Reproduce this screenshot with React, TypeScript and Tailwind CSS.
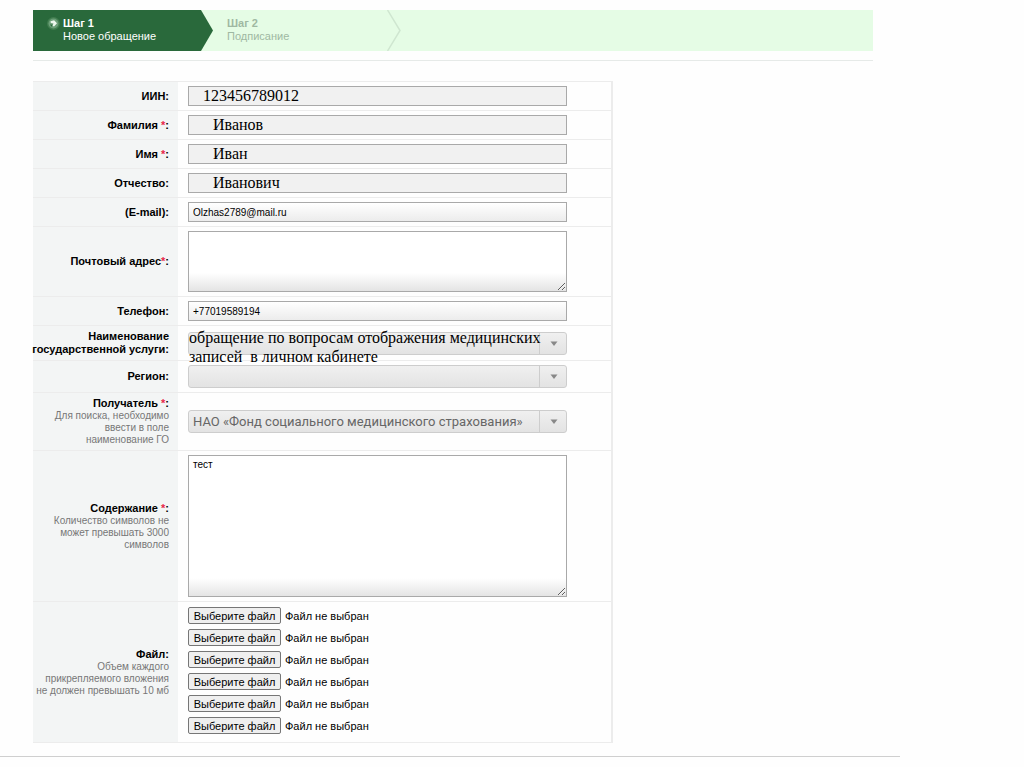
import { useRef } from 'react';
import type { ReactNode } from 'react';

interface FieldRowProps {
  id: string;
  label: ReactNode;
  required?: boolean;
  tight?: boolean;
  hint?: string;
  children: ReactNode;
}

const boxBase = 'block w-full border border-[#a9a9a9] rounded-none outline-none';
const textFont = "font-['Liberation_Sans',sans-serif]";
const serifFont = "font-['Liberation_Serif',serif]";

const files = ['file1', 'file2', 'file3', 'file4', 'file5', 'file6'];

function FieldRow({ id, label, required, tight, hint, children }: FieldRowProps) {
  return (
    <div className="grid grid-cols-[145px_1fr] border-b border-[#ececec]">
      <div className="flex flex-col items-end justify-center bg-[#f3f5f5] py-1 pr-[9px] text-right">
        <label htmlFor={id} className="text-[11px] leading-[13px] font-bold whitespace-nowrap text-black">
          {label}
          {required && (
            <>
              {tight ? '' : ' '}
              <span className="text-[#e8274b]">*</span>
            </>
          )}
          :
        </label>
        {hint && <p className="pl-0.5 text-[10px] leading-3 text-[#777]">{hint}</p>}
      </div>
      <div className="flex flex-col justify-center py-1 pr-11 pl-[10px]">{children}</div>
    </div>
  );
}

function LockedInput({ id, value, wide }: { id: string; value: string; wide?: boolean }) {
  return (
    <input
      id={id}
      type="text"
      readOnly
      defaultValue={value}
      className={`${boxBase} ${serifFont} h-5 bg-[#f1f1f1] text-base leading-4 text-black ${wide ? 'pl-[14px]' : 'pl-6'}`}
    />
  );
}

function TextInput({ id, type, value }: { id: string; type: string; value: string }) {
  return (
    <input
      id={id}
      type={type}
      defaultValue={value}
      className={`${boxBase} ${textFont} h-5 bg-linear-to-b from-white to-[#ececec] px-1 text-[10px] text-black`}
    />
  );
}

function TextArea({ id, value, size }: { id: string; value?: string; size: string }) {
  return (
    <textarea
      id={id}
      defaultValue={value}
      className={`${boxBase} ${textFont} ${size} resize bg-white bg-[linear-gradient(to_top,#e4e4e4,#ffffff_18px)] px-1 py-1 text-[10px] leading-[10px] text-black`}
    />
  );
}

function SelectBox({ id, value, overlay }: { id: string; value?: string; overlay?: ReactNode }) {
  return (
    <div className="relative">
      <select
        id={id}
        className="block h-[23px] w-full appearance-none rounded-[3px] border border-[#cdcdcd] bg-linear-to-b from-[#f0f0f0] to-[#e3e3e3] pr-8 pl-1 font-['Roboto',sans-serif] text-[13px] leading-5 text-[#666] outline-none"
      >
        <option>{value ?? ''}</option>
      </select>
      <span className="pointer-events-none absolute inset-y-0 right-0 flex w-7 items-center justify-center border-l border-[#cdcdcd]">
        <svg width="8" height="5" viewBox="0 0 8 5" aria-hidden="true">
          <path d="M0.5 0.5h7L4 5z" fill="#888" />
        </svg>
      </span>
      {overlay}
    </div>
  );
}

function FilePicker({ id, index }: { id: string; index: number }) {
  const inputRef = useRef<HTMLInputElement>(null);

  return (
    <div className="flex h-[22px] items-start gap-1 pt-px">
      <button
        type="button"
        onClick={() => inputRef.current?.click()}
        className="h-[17px] w-[93px] rounded-[2px] border border-[#767676] bg-[#efefef] text-[11px] leading-[14px] whitespace-nowrap text-black"
      >
        Выберите файл
      </button>
      <span className="text-[11px] leading-[18px] text-black">Файл не выбран</span>
      <input ref={inputRef} id={id} type="file" aria-label={`Файл ${index}`} className="hidden" />
    </div>
  );
}

function Steps() {
  return (
    <ol className="flex h-[41px] bg-[#e5fce5] text-[11px] leading-[13px]">
      <li className="flex">
        <div className="flex w-[168px] gap-[3px] bg-[#29693b] pt-[7px] pl-[14px] text-white">
          <svg width="13" height="13" viewBox="0 0 13 13" className="shrink-0" aria-hidden="true">
            <circle cx="6.5" cy="6.5" r="6.5" fill="#417d4f" />
            <circle cx="6.5" cy="6.5" r="5" fill="#6c9f78" />
            <path d="M3.5 4.2l3.6-.9 2.9 2.9-3 3.3-1.5-.8 1-2.2-2.7-.6z" fill="#eef8ee" />
            <path d="M3 7.5l2.6.3-1 2z" fill="#29693b" />
          </svg>
          <p>
            <strong>Шаг 1</strong>
            <br />
            Новое обращение
          </p>
        </div>
        <svg width="12" height="41" viewBox="0 0 12 41" aria-hidden="true">
          <path d="M0 0L12 20.5 0 41z" fill="#29693b" />
        </svg>
      </li>
      <li className="flex">
        <p className="w-[174px] pt-[7px] pl-[14px] text-[#9fb8a2]">
          <strong>Шаг 2</strong>
          <br />
          Подписание
        </p>
        <svg width="14" height="41" viewBox="0 0 14 41" aria-hidden="true">
          <path d="M0.5 0L13 20.5 0.5 41" fill="none" stroke="#cfe6d0" strokeWidth="1.5" />
        </svg>
      </li>
    </ol>
  );
}

export default function App() {
  return (
    <main className="min-h-screen bg-[#fefefe] font-['Liberation_Sans',sans-serif]">
      <div className="max-w-[900px] border-b border-[#cfcfcf] pt-[10px] pr-[27px] pb-[13px] pl-[33px]">
        <div className="border-b border-[#e6eae8] pb-[9px]">
          <Steps />
        </div>

        <form className="mt-5 max-w-[580px] border-t border-r-2 border-[#ececec]">
          <FieldRow id="iin" label="ИИН">
            <LockedInput id="iin" value="123456789012" wide />
          </FieldRow>
          <FieldRow id="surname" label="Фамилия" required>
            <LockedInput id="surname" value="Иванов" />
          </FieldRow>
          <FieldRow id="name" label="Имя" required>
            <LockedInput id="name" value="Иван" />
          </FieldRow>
          <FieldRow id="patronymic" label="Отчество">
            <LockedInput id="patronymic" value="Иванович" />
          </FieldRow>
          <FieldRow id="email" label="(E-mail)">
            <TextInput id="email" type="email" value="Olzhas2789@mail.ru" />
          </FieldRow>
          <FieldRow id="address" label="Почтовый адрес" required tight>
            <TextArea id="address" size="h-[61px]" />
          </FieldRow>
          <FieldRow id="phone" label="Телефон">
            <TextInput id="phone" type="tel" value="+77019589194" />
          </FieldRow>
          <FieldRow
            id="service"
            label={
              <>
                Наименование
                <br />
                государственной услуги
              </>
            }
          >
            <SelectBox
              id="service"
              overlay={
                <p
                  className={`${serifFont} pointer-events-none absolute -top-1 left-px z-10 text-base leading-[19px] whitespace-nowrap text-black`}
                >
                  обращение по вопросам отображения медицинских
                  <br />
                  записей{'\u00a0 '}в личном кабинете
                </p>
              }
            />
          </FieldRow>
          <FieldRow id="region" label="Регион">
            <SelectBox id="region" />
          </FieldRow>
          <FieldRow
            id="recipient"
            label="Получатель"
            required
            hint="Для поиска, необходимо ввести в поле наименование ГО"
          >
            <SelectBox id="recipient" value="НАО «Фонд социального медицинского страхования»" />
          </FieldRow>
          <FieldRow
            id="content"
            label="Содержание"
            required
            hint="Количество символов не может превышать 3000 символов"
          >
            <TextArea id="content" value="тест" size="h-[142px]" />
          </FieldRow>
          <FieldRow
            id="file1"
            label="Файл"
            hint="Объем каждого прикрепляемого вложения не должен превышать 10 мб"
          >
            {files.map((id, i) => (
              <FilePicker key={id} id={id} index={i + 1} />
            ))}
          </FieldRow>
        </form>
      </div>
    </main>
  );
}
